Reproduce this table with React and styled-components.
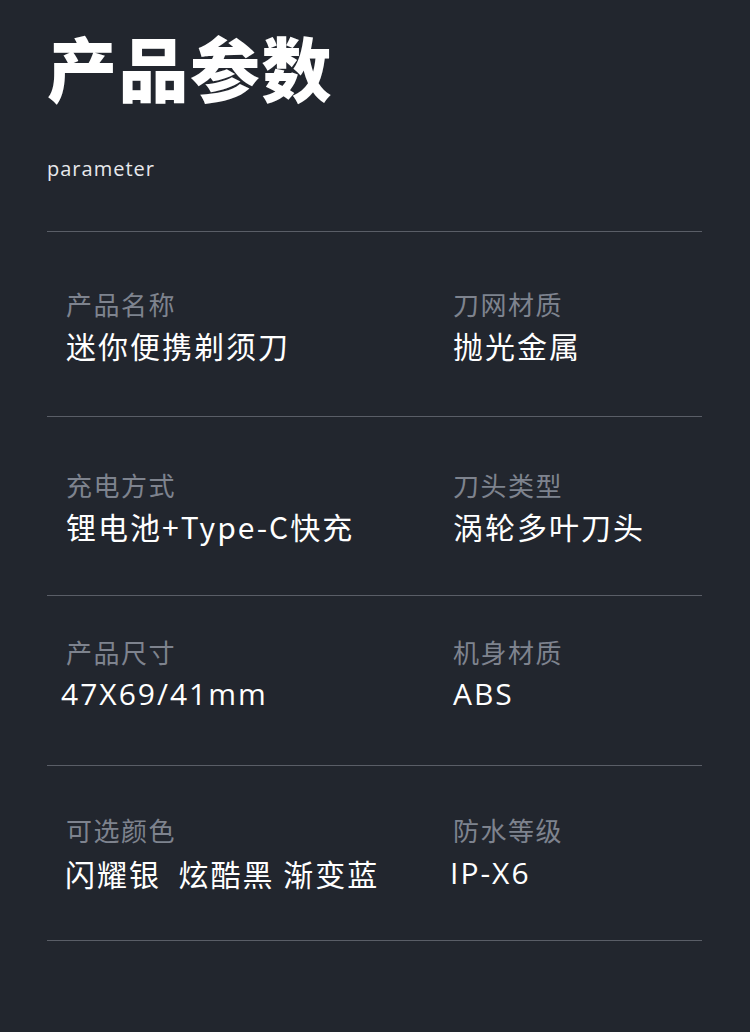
import React from "react";
import styled, { createGlobalStyle } from "styled-components";

const BG = "#22262e";
const LINE = "#5a5e67";
const LABEL = "#7e838e";
const WHITE = "#ffffff";

const CJK = `"Noto Sans CJK SC", "Noto Sans", sans-serif`;
const LATIN = `"Open Sans", "Noto Sans CJK SC", sans-serif`;

const rows = [
  {
    pad: 56,
    gap: 6,
    height: 185,
    cells: [
      { label: "产品名称", value: "迷你便携剃须刀" },
      { label: "刀网材质", value: "抛光金属" },
    ],
  },
  {
    pad: 52,
    gap: 6,
    height: 179,
    cells: [
      { label: "充电方式", value: "锂电池+Type-C快充" },
      { label: "刀头类型", value: "涡轮多叶刀头" },
    ],
  },
  {
    pad: 40,
    gap: 7,
    height: 170,
    cells: [
      { label: "产品尺寸", value: "47X69/41mm", latin: true, shift: -5 },
      { label: "机身材质", value: "ABS", latin: true },
    ],
  },
  {
    pad: 48,
    gap: 8,
    height: 175,
    cells: [
      { label: "可选颜色", value: "闪耀银\u00a0 炫酷黑 渐变蓝", shift: -1 },
      { label: "防水等级", value: "IP-X6", latin: true, shift: -3 },
    ],
  },
];

function App() {
  return (
    <Page>
      <GlobalStyle />
      <Header>
        <Title>产品参数</Title>
        <Subtitle>parameter</Subtitle>
      </Header>
      <List>
        {rows.map((row, i) => (
          <Row key={i} $pad={row.pad} $height={row.height}>
            {row.cells.map((cell) => (
              <Cell key={cell.label} $gap={row.gap}>
                <Label>{cell.label}</Label>
                <Value $latin={cell.latin} $shift={cell.shift || 0}>
                  {cell.value}
                </Value>
              </Cell>
            ))}
          </Row>
        ))}
      </List>
    </Page>
  );
}

const GlobalStyle = createGlobalStyle`
  html, body {
    margin: 0;
    padding: 0;
    background: ${BG};
  }
  * {
    box-sizing: border-box;
  }
`;

const Page = styled.div`
  width: 750px;
  min-height: 1032px;
  background: ${BG};
  padding: 0 48px 0 47px;
  font-family: ${CJK};
  color: ${WHITE};
`;

const Header = styled.header`
  padding-top: 27px;
  height: 231px;
`;

const Title = styled.h1`
  margin: 0;
  font-size: 70px;
  line-height: 80px;
  font-weight: 900;
  letter-spacing: 1.5px;
`;

const Subtitle = styled.div`
  margin-top: 50px;
  font-family: ${LATIN};
  font-size: 20px;
  line-height: 24px;
  letter-spacing: 1px;
  color: #e8e9ec;
`;

const List = styled.div`
  border-bottom: 1px solid ${LINE};
`;

const Row = styled.div`
  display: grid;
  grid-template-columns: 387px 1fr;
  height: ${(p) => p.$height}px;
  padding: ${(p) => p.$pad}px 0 0 19px;
  border-top: 1px solid ${LINE};
`;

const Cell = styled.div`
  display: flex;
  flex-direction: column;
  gap: ${(p) => p.$gap}px;
`;

const Label = styled.div`
  font-size: 26px;
  line-height: 32px;
  letter-spacing: 1.5px;
  color: ${LABEL};
`;

const Value = styled.div`
  font-family: ${(p) => (p.$latin ? LATIN : CJK)};
  font-size: 30px;
  line-height: 38px;
  letter-spacing: 2px;
  color: ${WHITE};
  margin-left: ${(p) => p.$shift}px;
  white-space: nowrap;
`;

export default App;
